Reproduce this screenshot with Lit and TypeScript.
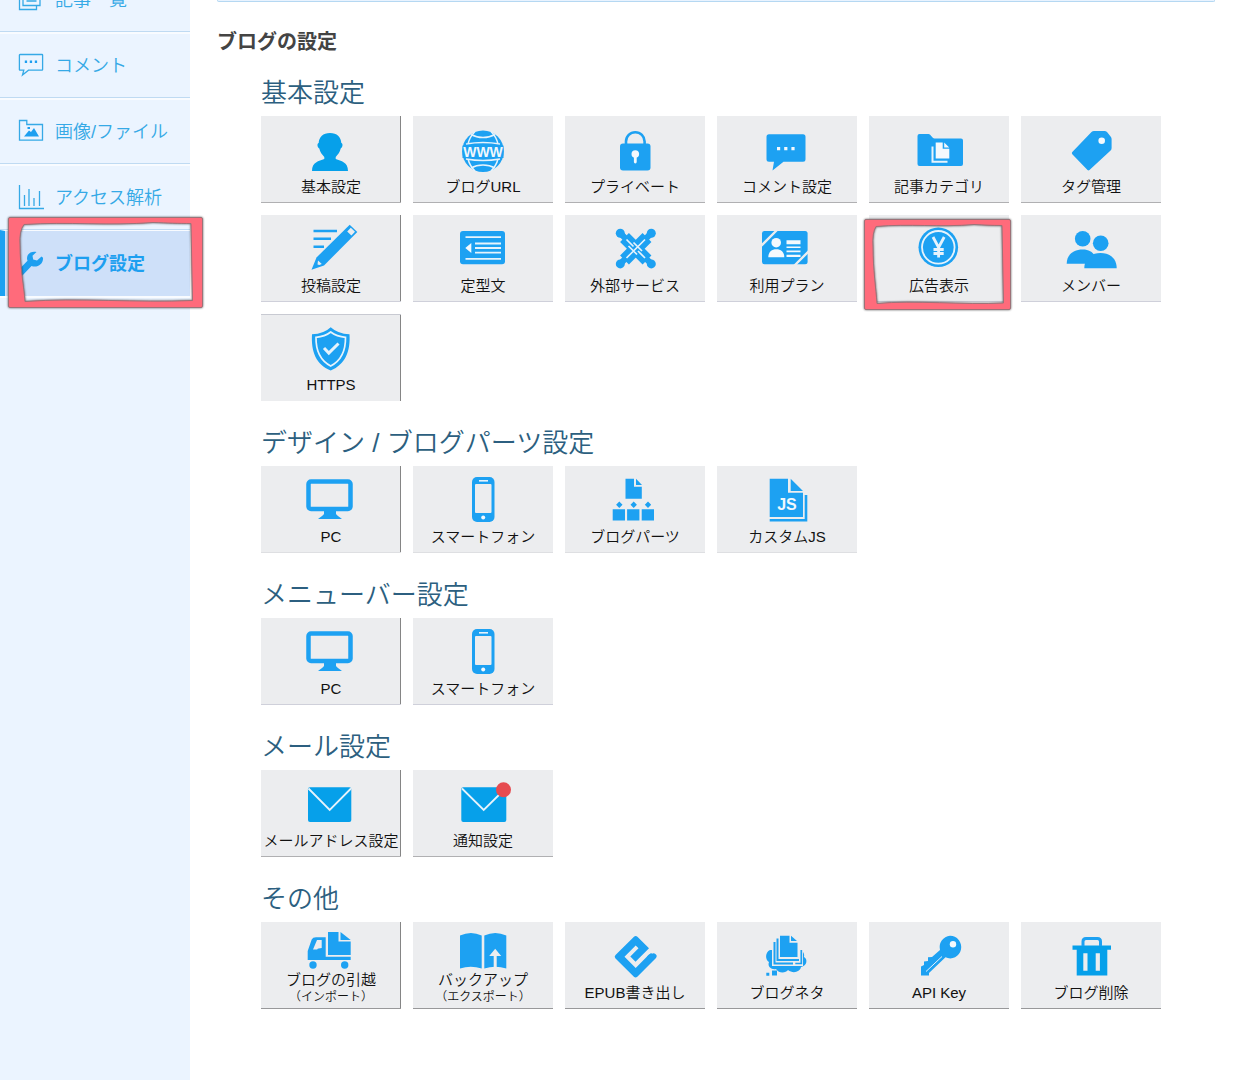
import { LitElement, html, svg, css, nothing, TemplateResult } from "lit";
import { customElement, property } from "lit/decorators.js";

type Art = TemplateResult;

const monitor = svg`
  <rect x="47.5" y="15.5" width="42" height="27.5" rx="2.5" fill="none" stroke="#1da1f2" stroke-width="4.5"/>
  <path d="M63 44h12v4c1 2 4 3 6 5H57c2-2 5-3 6-5z"/>`;

const phone = svg`
  <rect x="59" y="11" width="22.5" height="45" rx="5"/>
  <rect class="bg" x="62" y="18" width="16.5" height="29" rx="1"/>
  <path class="line" d="M66 14.8h9" stroke-width="1.6"/>
  <circle class="light" cx="70.2" cy="51.5" r="2"/>`;

const icons: Record<string, Art> = {
  person: svg`<path class="deep" d="M69 17c7 0 11 4 11.300 10c2 .6 1.300 4.500-.6 5.500c-.8 3.500-2.700 6-5 8.500v2c5.500 2 12.300 3 12.300 12H51c0-9 6.800-10 12.300-12v-2c-2.300-2.500-4.200-5-5-8.500c-1.900-1-2.600-4.900-.6-5.500c.3-6 4.300-10 11.300-10z"/>`,
  globe: svg`
    <circle cx="70" cy="35.300" r="20.800"/>
    <path class="line" d="M53 28q17-3 34 0M53 43q17 3 34 0M62 15.500c-4 4-6 8-7 12.500M78 15.500c4 4 6 8 7 12.500M62 55c-4-4-6-8-7-12M78 55c4-4 6-8 7-12M58 18.500c7 4 17 4 24 0M58 52c7-4 17-4 24 0" stroke-width="1.500"/>
    <path d="M49.500 29.500h41v12.500h-41z"/>
    <text x="70" y="41" font-size="14">WWW</text>`,
  lock: svg`
    <rect x="55" y="27.500" width="30.500" height="27" rx="3"/>
    <path d="M61 29v-3.500a9.300 9.300 0 0 1 18.600 0V29" fill="none" stroke="#1da1f2" stroke-width="2.600"/>
    <circle class="light" cx="70.300" cy="38" r="3.800"/><path class="light" d="M68.900 38h2.800v8a1.400 1.400 0 0 1-2.800 0z"/>`,
  comment: svg`
    <path d="M52 18.300h34a2.500 2.500 0 0 1 2.500 2.500v22.500a2.500 2.500 0 0 1-2.500 2.500H66.500L55.500 54.500l1.500-8.700h-5a2.500 2.500 0 0 1-2.500-2.500V20.800a2.500 2.500 0 0 1 2.500-2.500z"/>
    <path class="light" d="M60 31h3.200v3.200H60zM67.200 31h3.200v3.200h-3.200zM74.400 31h3.200v3.200h-3.200z"/>`,
  folder: svg`
    <path d="M50.500 18h9c2.500 0 3.500 4.500 6 4.500h26.500a2 2 0 0 1 2 2V48a2 2 0 0 1-2 2H50.500a2 2 0 0 1-2-2V20a2 2 0 0 1 2-2z"/>
    <path class="line" d="M63.500 30.500v15.300h15" stroke-width="2"/>
    <path class="light" d="M66.700 26.500h7v6.300h6.600v9.700H66.700zM75.200 26.500l5 5h-5z"/>`,
  tag: svg`<path d="M73 15h10.500q1.500 0 2.500 1l3.600 4.500q1 1 1 2.500V32q0 1.500-1 2.500L68.500 54q-1 .8-2 0L51.300 38.200q-1-1.200 0-2.200L70.500 16q1-1 2.500-1z"/><circle class="light" cx="80.700" cy="24.700" r="3.300"/>`,
  pencil: svg`
    <path d="M52.500 16H76M52.500 23.800H70M52.500 31.700H63" fill="none" stroke="#1da1f2" stroke-width="2.400"/>
    <path d="M88.700 9.700L96.300 17L63 50.500L50.500 54.800L55.500 42.500z"/>
    <path class="bg" d="M89.800 12.800l4.200 4-3.600 3.700-4.200-4zM57 45.500l3.800 3.600-2.500 1-1.800-.5z"/>`,
  card: svg`
    <rect x="47" y="16" width="45" height="33.200" rx="3"/>
    <path class="line" d="M52.500 22.200H88M52.500 43.800H88M62 28.500H88M62 33H88M62 37.600H88" stroke-width="1.800"/>
    <path class="light" d="M52.300 33l6-5v10z"/>`,
  links: svg`
    <path d="M59.500 22.500L82 45M82 22.500L59.500 45" fill="none" stroke="#1da1f2" stroke-width="12.500"/>
    <path d="M55 18L86.500 49M86.500 18L55 49" fill="none" stroke="#1da1f2" stroke-width="6"/>
    <circle cx="55.300" cy="18.200" r="4.500"/><circle cx="86.300" cy="18.200" r="4.500"/><circle cx="55.300" cy="48.900" r="4.500"/><circle cx="86.300" cy="48.900" r="4.500"/>
    <path class="line" d="M61.500 24.500l7 7M80 24.500L65 39.500M80 43L73 36M61.500 43l3.500-3.500M68.500 27.500L77 36M72 39.500L63.500 31" stroke-width="1.700"/>`,
  idcard: svg`
    <rect x="45" y="16" width="45.600" height="33.300" rx="2.500"/>
    <path d="M44 31L60 15M77 51L92 36" stroke="#ecedef" stroke-width="2.400"/>
    <circle class="light" cx="59.200" cy="27.700" r="4.800"/>
    <path class="light" d="M51.300 42.300c0-5 3-8 8-8s8 3 8 8z"/>
    <path class="light" d="M69.500 25.200H83.500v4H69.500zM69.500 31.500H83.500v1.600H69.500zM69.500 35.600H83.500v1.600H69.500zM69.500 39.700H83.500v2.200H69.500z"/>`,
  yen: svg`
    <circle cx="69.300" cy="32.300" r="19.800"/><circle cx="69.300" cy="32.300" r="16.300" class="line" stroke-width="1.800"/>
    <path class="line" d="M64 22l5.600 10.500l5.600-10.500M69.600 31.500V42.500M64.500 34.500h10.200M64.500 38.500h10.200" stroke-width="2.800"/>`,
  people: svg`
    <path d="M45.700 48.800c0-8.500 6-14.300 16-14.300c9 0 13 5 15 14.300z"/><circle cx="61.700" cy="23.700" r="7.800"/>
    <path d="M63.300 53.200c0-9 6-15.300 16.200-15.300s16.200 6.300 16.200 15.300z"/><circle cx="79.700" cy="28.200" r="9" class="bg"/><circle cx="79.700" cy="28.200" r="7.800"/>`,
  shield: svg`
    <path d="M69.700 12.200q7 6.500 18.800 7c1 17-4 30-18.800 36.300C55 49.500 50 36.500 51 19.200q12-.5 18.700-7z"/>
    <path class="line" d="M69.700 17q6 4.600 14.800 5.300c.2 13-4 23.200-14.800 28.700C59 45.500 54.800 35.500 55 22.300q9-.7 14.700-5.300z" stroke-width="1.700"/>
    <path class="line" d="M63 33l4.800 5L77.500 28.500" stroke-width="3"/>`,
  monitor,
  phone,
  parts: svg`
    <path d="M60.500 12.700H69v8h7.800v12H60.500zM71 12.700l6 6.300h-6z"/>
    <path d="M54.300 35.500l3.200 3.200-3.200 3.200-3.200-3.200zM68.700 35.500l3.200 3.200-3.200 3.200-3.200-3.200zM83 35.500l3.200 3.200-3.200 3.200-3.200-3.200z"/>
    <path d="M47.700 43.300H60v11.200H47.700zM62.100 43.300h12.300v11.200H62.100zM76.700 43.300H89v11.200H76.700z"/>`,
  script: svg`
    <path d="M52.700 12.700H71v14h15V51H52.700zM73.700 12.700L86 25H73.700z"/>
    <path d="M52.700 54.300H89V29" fill="none" stroke="#1da1f2" stroke-width="2.600"/>
    <text x="70" y="43.500" font-size="16">JS</text>`,
  mail: svg`<rect class="deep" x="47" y="17.300" width="43.300" height="34.700" rx="2"/><path class="line" d="M47.500 18.500L68.700 40L90 18.500" stroke-width="1.800"/>`,
  notice: svg`<rect class="deep" x="48.300" y="17.300" width="45" height="34.700" rx="2"/><path class="line" d="M49 18.500L70.700 40L92.500 18.500" stroke-width="1.800"/><circle class="alert" cx="90.500" cy="19.700" r="7.500"/>`,
  truck: svg`
    <path d="M55 15.300h9.700v19.400h25v3.200H46.700V29l4-11.500q1-2.200 4.300-2.200z"/>
    <path class="bg" d="M56 18h4.700v8q-4 0-4.500 1.500H52z"/>
    <path d="M67 10h10.500v9.500h12.200V33H67zM79.500 10l10.200 8h-10.200z"/>
    <circle cx="52" cy="43" r="3.700"/><circle cx="83.700" cy="43" r="3.700"/>`,
  book: svg`
    <path d="M47 13.500q11-5 21.700 0V46.500q-11-3.500-21.700 0zM71.300 13.500q11-5 22 0V46.500q-11-3.500-22 0z"/>
    <path class="bg" d="M82.200 26.700l6 7.300h-4.500v12.500h-3V34h-4.500z"/>`,
  epub: svg`<path d="M86.500 32.500a2.800 2.800 0 0 1 4.500 3.400L72.300 54.700q-1.700 1.500-3.400 0L50.500 36.400q-1.700-1.700 0-3.400L69 14.700q1.700-1.500 3.400 0L84 26.200L70.500 39.700L65.300 34.500L73.500 26.300L70.700 23.500L59.500 34.700L70.700 45.900L84 32.600q1.700-1.200 2.500-.1z"/><path d="M86 31l5 3.500-4 4-5-4z"/>`,
  neta: svg`
    <path d="M53 28c-5 2-5 10-1 12c-2 5 3 8 7 7c3 5 10 4 12 1c5 4 12 2 13-3c6-1 7-8 3-10c1-4-2-7-5-7z"/>
    <path d="M55 48.500h5v5h-5zM49.300 50.700h3v3h-3z"/>
    <path class="bg" d="M55 18h28v4h3v22H55z"/>
    <path d="M57.500 20v21.500h18.500M60.500 16.500v21.500h21.500" fill="none" stroke="#1da1f2" stroke-width="2"/>
    <path d="M84.300 28v13.500h-6" fill="none" stroke="#1da1f2" stroke-width="1.700"/>
    <path class="bg" d="M62 12.500h19.500v24H62z"/>
    <path d="M63 13.700h9.500v7h8V35H63zM74 13.700l6 5.300h-6z"/>`,
  key: svg`
    <path d="M81 13.800a11 11.300 0 1 1-4.500 21.500L60 51v2.500H52v-9l3-1.500v-3.500l4-.5v-3.700l4-.3 8-7A11 11.300 0 0 1 81 13.800z"/>
    <circle class="light" cx="84" cy="22.300" r="3.200"/><path class="line" d="M57 49.500L73 34.500" stroke-width="1"/>`,
  trash: svg`
    <path class="deep" d="M51.500 23.500H90v4.200h-3.700v25.800H55.700V27.700h-4.200z"/>
    <path d="M62 24v-4.500q0-3 3-3h11.500q3 0 3 3V24" fill="none" stroke="#1da1f2" stroke-width="3"/>
    <path class="bg" d="M62.300 31.300h4.200v17.400h-4.200zM74.700 31.300h4.200v17.400h-4.200z"/>`,
};

const navIcons: Record<string, Art> = {
  list: svg`<path d="M5 1.500h17v17H5zM1.500 5v17.500h17V19M8.500 6h10M8.500 10h10M8.500 14h10"/>`,
  comment: svg`<path d="M2 1.500h22a.6.6 0 0 1 .6.6v14.500a.6.6 0 0 1-.6.6H10.500L4.500 22l1.300-4.800H2a.6.6 0 0 1-.6-.6V2.100a.6.6 0 0 1 .6-.6z"/><path class="solid" d="M6.800 7.600h2.300v2.300H6.800zM11.800 7.600h2.300v2.300h-2.300zM16.800 7.600h2.300v2.300h-2.300z"/>`,
  image: svg`<path d="M1.500 1.500h7.300v4H24.500v15.700h-23z"/><path class="solid" d="M6 17.500l5-6 2 1.500 3-4 5 8.500zM9.500 8h2.500v2H9.500z"/>`,
  chart: svg`<path d="M1.500 0v23.500H26M6.500 10v11M11 4v17M16 13v8M21.500 6v15"/>`,
  wrench: svg`<path class="solid" d="M23.500 5.500l-4.500 4-3.800-1-.7-3.700L18.500 1c-3-1-7 0-8.700 3c-1 2-1 4-.3 5.800L0 19.500v5l3.500 1L13.500 15c6 2 12-2 11.500-8.300z"/>`,
};

interface Tile { label: string; icon: string; sub?: string; edge?: string; marked?: boolean }
interface Group { title: string; tiles: Tile[] }
interface Entry { label: string; icon: string; active?: boolean }

const entries: Entry[] = [
  { label: "記事一覧", icon: "list" },
  { label: "コメント", icon: "comment" },
  { label: "画像/ファイル", icon: "image" },
  { label: "アクセス解析", icon: "chart" },
  { label: "ブログ設定", icon: "wrench", active: true },
];

const groups: Group[] = [
  {
    title: "基本設定",
    tiles: [
      { label: "基本設定", icon: "person", edge: "mid" },
      { label: "ブログURL", icon: "globe", edge: "mid" },
      { label: "プライベート", icon: "lock", edge: "mid" },
      { label: "コメント設定", icon: "comment", edge: "mid" },
      { label: "記事カテゴリ", icon: "folder", edge: "mid" },
      { label: "タグ管理", icon: "tag", edge: "mid" },
      { label: "投稿設定", icon: "pencil", edge: "pale" },
      { label: "定型文", icon: "card", edge: "pale" },
      { label: "外部サービス", icon: "links", edge: "pale" },
      { label: "利用プラン", icon: "idcard", edge: "pale" },
      { label: "広告表示", icon: "yen", edge: "pale", marked: true },
      { label: "メンバー", icon: "people", edge: "pale" },
      { label: "HTTPS", icon: "shield", edge: "top" },
    ],
  },
  {
    title: "デザイン / ブログパーツ設定",
    tiles: [
      { label: "PC", icon: "monitor", edge: "faint" },
      { label: "スマートフォン", icon: "phone", edge: "faint" },
      { label: "ブログパーツ", icon: "parts", edge: "faint" },
      { label: "カスタムJS", icon: "script", edge: "faint" },
    ],
  },
  {
    title: "メニューバー設定",
    tiles: [
      { label: "PC", icon: "monitor", edge: "pale" },
      { label: "スマートフォン", icon: "phone", edge: "pale" },
    ],
  },
  {
    title: "メール設定",
    tiles: [
      { label: "メールアドレス設定", icon: "mail", edge: "mid" },
      { label: "通知設定", icon: "notice", edge: "mid" },
    ],
  },
  {
    title: "その他",
    tiles: [
      { label: "ブログの引越", sub: "（インポート）", icon: "truck", edge: "dark" },
      { label: "バックアップ", sub: "（エクスポート）", icon: "book", edge: "dark" },
      { label: "EPUB書き出し", icon: "epub", edge: "dark" },
      { label: "ブログネタ", icon: "neta", edge: "dark" },
      { label: "API Key", icon: "key", edge: "dark" },
      { label: "ブログ削除", icon: "trash", edge: "dark" },
    ],
  },
];

/* Hand-drawn red frame laid over an item; the opening in the middle is slightly uneven. */
const navFrame = html`<svg class="frame" viewBox="0 0 197 93" aria-hidden="true">
  <path d="M2 .5H193Q194.500 .5 194.500 2V89Q194.500 90.500 193 90.500H2Q.5 90.500 .5 89V2Q.5 .5 2 .5ZM16 7.500Q11 14 12 28C12 50 16 70 17 84.500C70 80.500 130 86 184.500 83.500L183 6.500C170 6.500 160 6 145 5.500C100 9 60 4.500 16 7.500Z"/>
</svg>`;

const tileFrame = html`<svg class="frame" viewBox="0 0 149 92" aria-hidden="true">
  <path d="M2 .5H145Q146.500 .5 146.500 2V89Q146.500 90.500 145 90.500H2Q.5 90.500 .5 89V2Q.5 .5 2 .5ZM12 7.500Q8 14 9 28C9 50 12 70 13 84.500C50 81 100 86 139.500 84L138 6.500C128 6.500 120 6 110 5.500C76 8.500 45 4.500 12 7.500Z"/>
</svg>`;

@customElement("side-menu")
export class SideMenu extends LitElement {
  static styles = css`
    :host { display: block; background: #ebf4ff; }
    .list { list-style: none; margin: -34px 0 0; padding: 0; border-bottom: 2px solid #f8fbff; }
    .item { position: relative; }
    .link {
      display: flex; align-items: center; gap: 11px; box-sizing: border-box; height: 66px;
      padding: 0 8px 0 18px; border-top: 2px solid #f8fbff; border-bottom: 1px solid #bfdaf2;
      color: #35a9e6; font-size: 18px; font-weight: 350; line-height: 24px; text-decoration: none; white-space: nowrap;
    }
    .active { padding-left: 13px; border-left: 5px solid #1da1f2; border-top-width: 1px; border-bottom: 0; background: #cee0f9; color: #1d9ff0; font-weight: 700; }
    .icon { width: 26px; height: 26px; flex: none; fill: none; stroke: #35a9e6; stroke-width: 1.3; }
    .icon .solid { fill: #1d9ff0; stroke: none; }
    .frame {
      position: absolute; left: 8px; top: -13px; width: 197px; height: 93px; pointer-events: none;
      fill: #ff6b7b; fill-rule: evenodd; stroke: #9c7278; stroke-width: 1; filter: drop-shadow(0 0 1px rgba(0, 0, 0, 0.6));
    }
  `;

  render() {
    return html`<nav aria-label="メニュー">
      <ul class="list">
        ${entries.map((e) => html`<li class="item">
          <a class="link ${e.active ? "active" : ""}" href="#${e.icon}">
            <svg class="icon" viewBox="0 0 26 26" aria-hidden="true">${navIcons[e.icon]}</svg>
            <span>${e.label}</span>
          </a>
          ${e.active ? navFrame : nothing}
        </li>`)}
      </ul>
    </nav>`;
  }
}

@customElement("setting-group")
export class SettingGroup extends LitElement {
  @property({ attribute: false }) group!: Group;

  static styles = css`
    :host { display: block; }
    .title { margin: 0 0 5px; color: #2c5f80; font-size: 26px; font-weight: 350; line-height: 36px; }
    .tiles { display: flex; flex-wrap: wrap; gap: 12px; list-style: none; margin: 0; padding: 0; }
    .cell { position: relative; }
    .tile {
      display: flex; flex-direction: column; align-items: center; box-sizing: border-box;
      width: 140px; height: 87px; background: #ecedef; border-bottom: 1px solid #b0b0b2;
      color: #111; font-size: 15px; font-weight: 350; line-height: 20px; text-decoration: none; white-space: nowrap;
    }
    .first .tile { box-shadow: inset -1px 0 #858585; }
    .pale { border-bottom-color: #cfd0da; }
    .faint { border-bottom-color: #dedfe2; }
    .dark { border-bottom-color: #98989a; }
    .top { border-bottom: 0; border-top: 1px solid #c8cad2; }
    .art { width: 140px; height: 61px; flex: none; fill: #1da1f2; }
    .top .art { height: 60px; }
    .art.short { height: 48px; }
    .art .deep { fill: #06a0ea; }
    .art .bg { fill: #ecedef; }
    .art .light { fill: #f4f9fd; }
    .art .alert { fill: #e64b50; }
    .art .line { fill: none; stroke: #e6f3fc; }
    .art text { fill: #f1f8fd; font-family: "Liberation Sans", Arial, sans-serif; font-weight: 700; text-anchor: middle; }
    .sub { font-size: 12px; line-height: 14px; }
    .frame {
      position: absolute; left: -5px; top: 4px; width: 149px; height: 92px; pointer-events: none;
      fill: #ff6b7b; fill-rule: evenodd; stroke: #9c7278; stroke-width: 1; filter: drop-shadow(0 0 1px rgba(0, 0, 0, 0.6));
    }
  `;

  render() {
    const { title, tiles } = this.group;
    return html`<section>
      <h2 class="title">${title}</h2>
      <ul class="tiles">
        ${tiles.map((t, i) => html`<li class="cell ${i % 6 === 0 ? "first" : ""}">
          <a class="tile ${t.edge ?? ""}" href="#${t.icon}">
            <svg class="art ${t.sub ? "short" : ""}" viewBox="0 0 140 ${t.sub ? 48 : t.edge === "top" ? 60 : 61}" aria-hidden="true">${icons[t.icon]}</svg>
            <span>${t.label}</span>
            ${t.sub ? html`<span class="sub">${t.sub}</span>` : nothing}
          </a>
          ${t.marked ? tileFrame : nothing}
        </li>`)}
      </ul>
    </section>`;
  }
}

@customElement("app-root")
export class AppRoot extends LitElement {
  static styles = css`
    :host {
      display: grid; grid-template-columns: 190px minmax(0, 1fr); min-height: 100vh; background: #fff;
      font-family: "Liberation Sans", Arial, "Noto Sans CJK JP", sans-serif;
    }
    .menu { position: relative; z-index: 1; }
    .main { padding: 0 27px 64px; }
    .notice { height: 1px; background: #e8f3ff; border: 1px solid #b5d8f2; border-top: 0; border-radius: 0 0 4px 4px; }
    .heading { margin: 25px 0 18px; color: #444; font-size: 20px; font-weight: 700; line-height: 30px; }
    .groups { display: flex; flex-direction: column; gap: 24px; padding-left: 44px; }
  `;

  render() {
    return html`
      <side-menu class="menu"></side-menu>
      <main class="main">
        <div class="notice"></div>
        <h1 class="heading">ブログの設定</h1>
        <div class="groups">
          ${groups.map((g) => html`<setting-group .group=${g}></setting-group>`)}
        </div>
      </main>`;
  }
}
